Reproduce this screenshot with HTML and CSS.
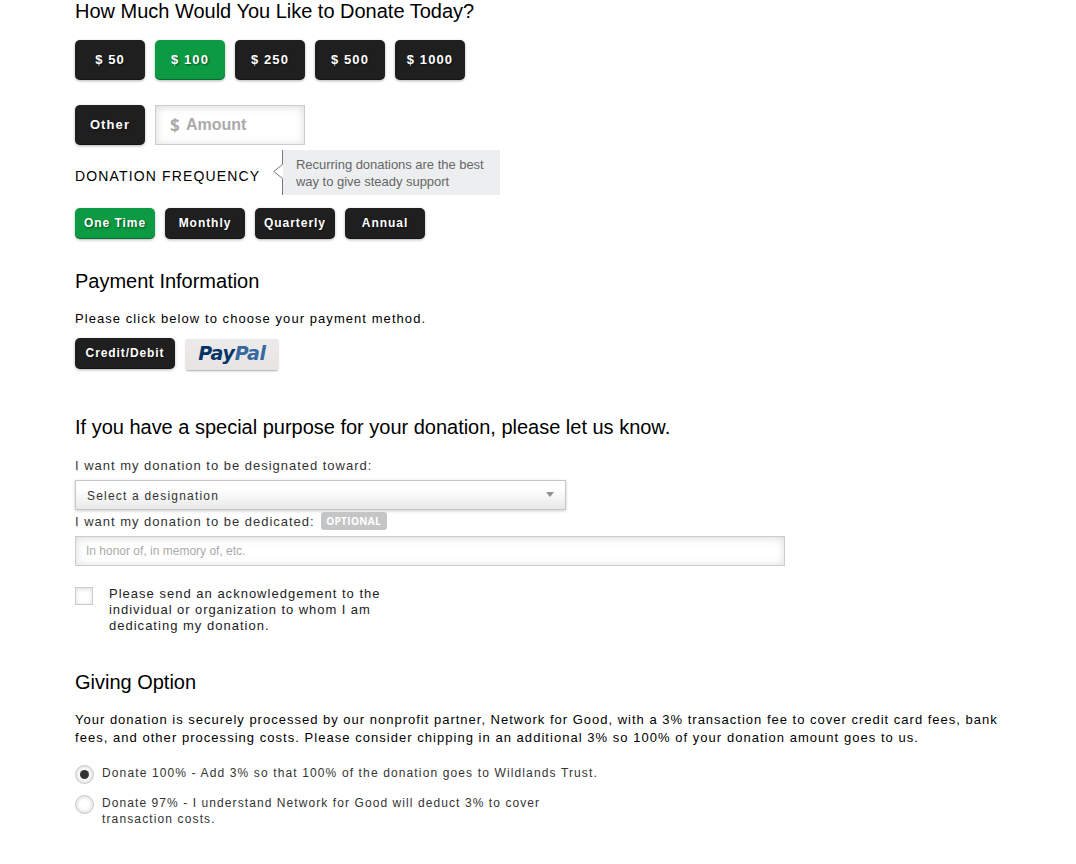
FILE: index.html
```html
<!DOCTYPE html>
<html lang="en">
<head>
<meta charset="utf-8">
<title>Donate</title>
<link rel="stylesheet" href="styles.css">
</head>
<body>
<main class="form">
  <h2 class="title first-title">How Much Would You Like to Donate Today?</h2>
  <div class="row amounts">
    <button class="btn amount">$ 50</button>
    <button class="btn amount selected">$ 100</button>
    <button class="btn amount">$ 250</button>
    <button class="btn amount">$ 500</button>
    <button class="btn amount">$ 1000</button>
  </div>
  <div class="row other">
    <button class="btn amount">Other</button>
    <div class="field amount-field"><span class="currency">$</span><span>Amount</span></div>
  </div>
  <div class="frequency-head">
    <span class="frequency-label">DONATION FREQUENCY</span>
    <div class="tip">
      <svg class="tip-edge" width="11" height="45" viewBox="0 0 11 45">
        <path d="M9.5 14.5 L10 29 L1 21.5 Z" fill="#fff"/>
        <path d="M9.5 0 V14.5 L0.7 21.5 L9.5 28.5 V45" fill="none" stroke="#77787a"/>
      </svg>
      <p class="tip-text">Recurring donations are the best<br>way to give steady support</p>
    </div>
  </div>
  <div class="row frequencies">
    <button class="btn small selected">One Time</button>
    <button class="btn small">Monthly</button>
    <button class="btn small">Quarterly</button>
    <button class="btn small">Annual</button>
  </div>

  <h2 class="title payment-title">Payment Information</h2>
  <p class="copy payment-copy">Please click below to choose your payment method.</p>
  <div class="row methods">
    <button class="btn small credit">Credit/Debit</button>
    <button class="paypal"><span class="pay">Pay</span><span class="pal">Pal</span></button>
  </div>

  <h2 class="title purpose-title">If you have a special purpose for your donation, please let us know.</h2>
  <div class="label">I want my donation to be designated toward:</div>
  <div class="select"><span class="select-text">Select a designation</span>
    <svg width="8" height="5" viewBox="0 0 8 5"><path d="M0 0 H8 L4 5 Z" fill="#909090"/></svg>
  </div>
  <div class="label dedicated"><span class="dedicated-text">I want my donation to be dedicated:</span><span class="optional">OPTIONAL</span></div>
  <div class="field dedication">In honor of, in memory of, etc.</div>
  <div class="ack">
    <span class="checkbox"></span>
    <span>Please send an acknowledgement to the<br><span class="tight">individual or organization to whom I am</span><br>dedicating my donation.</span>
  </div>

  <h2 class="title giving-title">Giving Option</h2>
  <p class="copy giving-copy">Your donation is securely processed by our nonprofit partner, Network for Good, with a 3% transaction fee to cover credit card fees, bank<br><span class="loose">fees, and other processing costs. Please consider chipping in an additional 3% so 100% of your donation amount goes to us.</span></p>
  <div class="option"><span class="radio checked"></span><span class="full">Donate 100% - Add 3% so that 100% of the donation goes to Wildlands Trust.</span></div>
  <div class="option"><span class="radio"></span><span>Donate 97% - I understand Network for Good will deduct 3% to cover<br><span class="full">transaction costs.</span></span></div>
</main>
</body>
</html>
```
FILE: styles.css
```css
* { box-sizing: border-box; }
body {
  margin: 0;
  background: #fff;
  color: #000;
  font-family: "Liberation Sans", Arial, sans-serif;
  font-size: 13px;
  letter-spacing: 1px;
}
p, h2 { margin: 0; }
button { border: 0; padding: 0; font-family: inherit; }
.form { padding-left: 75px; display: flex; flex-direction: column; align-items: flex-start; white-space: nowrap; }
.title { font-size: 20px; font-weight: 400; line-height: 24px; letter-spacing: -0.01px; }
.first-title { line-height: 22px; }
.row { display: flex; gap: 10px; }
.btn {
  height: 40px;
  padding-bottom: 2px;
  border-radius: 5px;
  background: #1f1f1f;
  color: #fff;
  font-size: 13px;
  font-weight: 700;
  letter-spacing: 1.1px;
  text-shadow: 1px 1px 2px rgba(0, 0, 0, .5);
  box-shadow: inset 0 -1px 0 rgba(0, 0, 0, .3), 0 1px 3px rgba(0, 0, 0, .3);
}
.amount { width: 70px; }
.selected { background: #0c9a43; }
.small { width: 80px; height: 31px; padding-bottom: 1px; font-size: 12px; letter-spacing: .95px; }
.amounts { margin-top: 18px; }
.other { margin-top: 25px; }
.field {
  display: flex;
  align-items: center;
  border: 1px solid #ccc;
  background: #fff;
  box-shadow: inset 0 1px 8px rgba(0, 0, 0, .15);
  color: #aaa;
  letter-spacing: 0;
}
.amount-field { width: 150px; height: 40px; padding: 0 0 0 14px; font-size: 16px; font-weight: 700; }
.currency { width: 16px; font-family: "Open Sans", sans-serif; font-size: 17px; }
.frequency-head { display: flex; margin-top: 5px; height: 45px; }
.frequency-label { width: 198px; padding-top: 18px; font-size: 14px; line-height: 17px; letter-spacing: 1.15px; }
.tip { display: flex; width: 227px; background: linear-gradient(to right, #fff 10px, #edeef0 10px); }
.tip-edge { flex: none; }
.tip-text { padding: 6px 0 0 12px; color: #666; line-height: 17px; letter-spacing: -.03px; }
.frequencies { margin-top: 13px; }
.payment-title { margin-top: 30px; }
.copy { line-height: 18px; }
.payment-copy { margin-top: 17px; letter-spacing: 1.06px; }
.methods { margin-top: 10px; gap: 11px; }
.credit { width: 100px; letter-spacing: .9px; }
.paypal {
  width: 92px;
  height: 31px;
  margin-top: 1px;
  padding-bottom: 3px;
  border-radius: 2px;
  background: linear-gradient(#ecebea, #e6e5e4);
  box-shadow: 0 1px 2px rgba(0, 0, 0, .35);
  font: italic 700 19px/26px "DejaVu Sans", sans-serif;
  letter-spacing: -.3px;
}
.pay { color: #023466; }
.pal { color: #35699f; }
.purpose-title { margin-top: 45px; }
.label { color: #333; line-height: 18px; margin-top: 18px; letter-spacing: .98px; }
.select {
  display: flex;
  justify-content: space-between;
  align-items: center;
  width: 491px;
  height: 30px;
  margin-top: 5px;
  padding: 0 11px;
  border: 1px solid #c6c6c6;
  background: linear-gradient(#fff 30%, #e8e8e8);
  box-shadow: 0 1px 3px rgba(0, 0, 0, .2);
  color: #333;
  font-size: 12px;
  letter-spacing: 1.2px;
}
.select-text { padding-top: 2px; }
.select svg { margin-top: -1px; }
.dedicated { display: flex; height: 18px; margin-top: 2px; }
.dedicated-text { line-height: 20px; }
.optional {
  width: 66px;
  height: 18px;
  margin-left: 6px;
  border-radius: 3px;
  background: #c5c5c5;
  color: #fff;
  font: 700 10px/18px "Open Sans", sans-serif;
  letter-spacing: .35px;
  text-align: center;
}
.dedication { width: 710px; height: 30px; margin-top: 6px; padding-left: 10px; font-size: 12px; }
.ack { display: flex; margin-top: 20px; color: #222; line-height: 16px; letter-spacing: 1.01px; }
.tight { letter-spacing: .93px; }
.checkbox { width: 18px; height: 18px; margin: 1px 16px 0 0; border: 1px solid #ccc; box-shadow: inset 0 1px 4px rgba(0, 0, 0, .15); }
.giving-title { margin-top: 36px; }
.giving-copy { margin-top: 17px; }
.loose { letter-spacing: 1.035px; }
.option { display: flex; margin-top: 18px; color: #333; font-size: 12px; line-height: 16px; letter-spacing: 1.08px; }
.option + .option { margin-top: 11px; }
.full { letter-spacing: 1.13px; }
.radio { position: relative; width: 19px; height: 19px; margin: 0 8px 0 0; border: 1px solid #c8c8c8; border-radius: 50%; background: #fff; box-shadow: inset 0 0 4px rgba(0, 0, 0, .22); }
.checked::after { content: ""; position: absolute; left: 4px; top: 4px; width: 9px; height: 9px; border-radius: 50%; background: #333; }
```
